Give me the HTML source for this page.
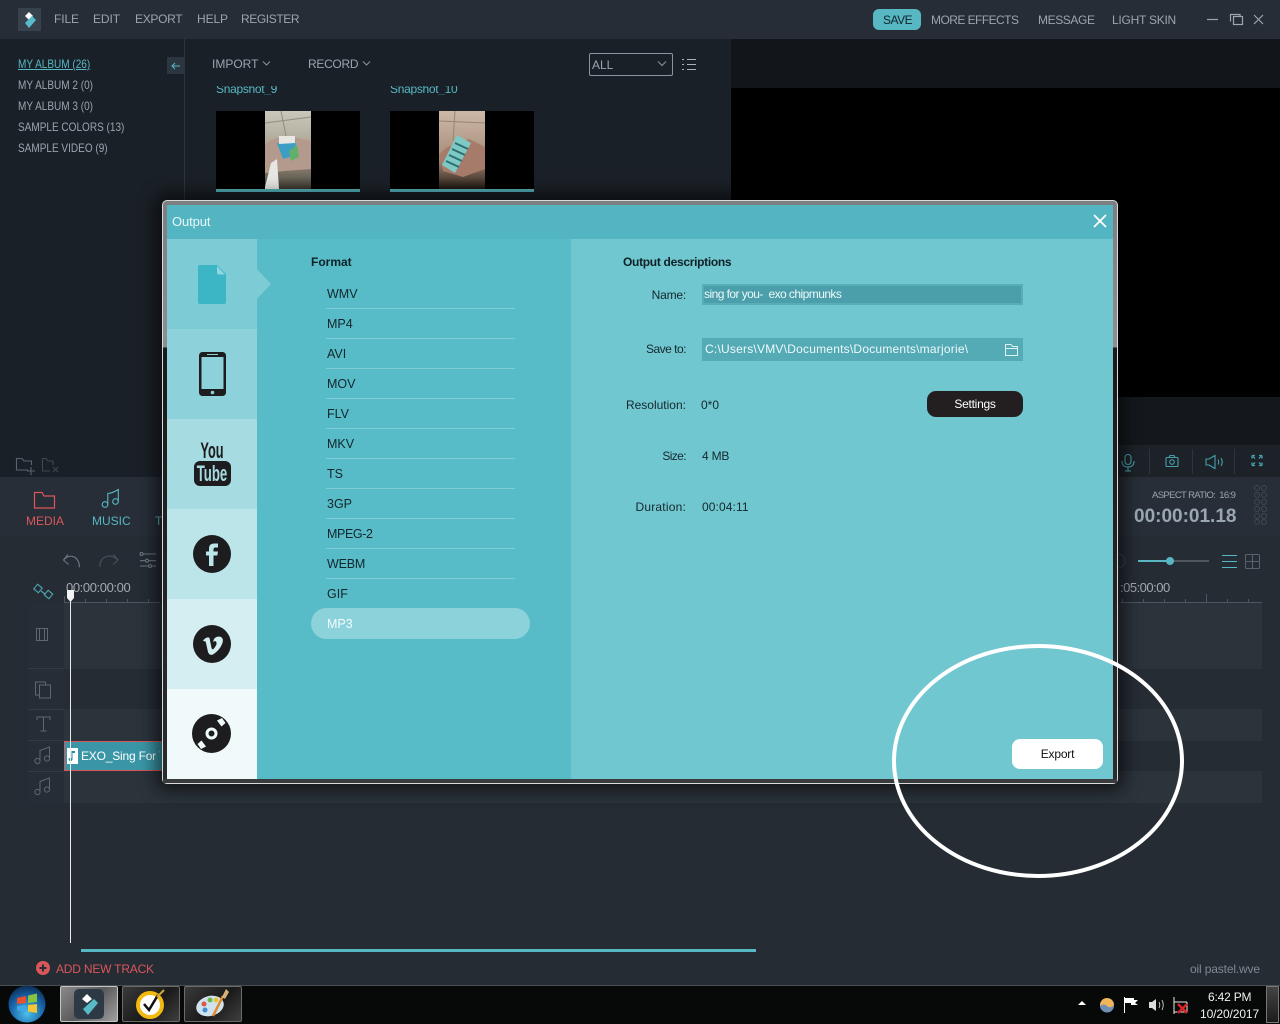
<!DOCTYPE html>
<html><head><meta charset="utf-8"><style>
html,body{margin:0;padding:0;width:1280px;height:1024px;overflow:hidden;background:#252c34}
body{position:relative;font-family:"Liberation Sans",sans-serif;font-size:12px}
.a,.t{position:absolute}
.t{white-space:nowrap;line-height:16px;height:16px}
svg{position:absolute;overflow:visible}
.g{color:#9ba5ad}
.s{transform:scaleX(.835);transform-origin:0 50%}
.f{color:#12262c;font-size:12.500px;left:327px}
.ln{position:absolute;left:326px;width:189px;height:1px;background:#7fccd5}
.lb{color:#15282d;font-size:12px;text-align:right;width:100px;left:586px}
.ic{fill:none;stroke:#5d6770;stroke-width:1}
</style></head><body>

<!-- top bar -->
<div class="a" style="left:0;top:0;width:1280px;height:39px;background:#262d36"></div>
<div class="a" style="left:18px;top:8px;width:23px;height:23px;background:#37424c"></div>
<svg style="left:0;top:0" width="60" height="40"><polygon points="29,12 33,16 29,20 25,16" fill="#fff"/><polygon points="25,23 32,16 36,20 29,28" fill="#57bcc8"/></svg>
<div class="t g" style="left:54px;top:11px;letter-spacing:-.1px">FILE</div>
<div class="t g" style="left:93px;top:11px;letter-spacing:-.1px">EDIT</div>
<div class="t g" style="left:135px;top:11px;letter-spacing:-.3px">EXPORT</div>
<div class="t g" style="left:197px;top:11px;letter-spacing:-.1px">HELP</div>
<div class="t g" style="left:241px;top:11px;letter-spacing:-.4px">REGISTER</div>
<div class="a" style="left:873px;top:9px;width:48px;height:21px;background:#57b7c3;border-radius:6px"></div>
<div class="t" style="left:883px;top:12px;color:#10252b;letter-spacing:-.5px">SAVE</div>
<div class="t g" style="left:931px;top:12px;letter-spacing:-.55px">MORE EFFECTS</div>
<div class="t g" style="left:1038px;top:12px;letter-spacing:-.4px">MESSAGE</div>
<div class="t g" style="left:1112px;top:12px;letter-spacing:-.25px">LIGHT SKIN</div>
<svg style="left:1200px;top:10px" width="70" height="20" fill="none" stroke="#9ba5ad" stroke-width="1.2"><path d="M7 9.500H18"/><rect x="33.500" y="6.500" width="9" height="8"/><path d="M30.500 11.500V4.500H40V6.500"/><path d="M54 5l9 9M63 5l-9 9"/></svg>

<!-- left media -->
<div class="a" style="left:0;top:39px;width:731px;height:438px;background:#1a2027"></div>
<div class="a" style="left:184px;top:39px;width:1px;height:161px;background:#2d353c"></div>
<div class="a" style="left:731px;top:39px;width:549px;height:49px;background:#12161a"></div>
<div class="a" style="left:731px;top:88px;width:549px;height:309px;background:#000"></div>
<div class="a" style="left:731px;top:397px;width:549px;height:48px;background:#14181c"></div>
<div class="a" style="left:731px;top:445px;width:549px;height:32px;background:#1c2228"></div>
<div class="t s" style="left:18px;top:56px;color:#57b7c3;text-decoration:underline">MY ALBUM (26)</div>
<div class="t g s" style="left:18px;top:77px">MY ALBUM 2 (0)</div>
<div class="t g s" style="left:18px;top:98px">MY ALBUM 3 (0)</div>
<div class="t g s" style="left:18px;top:119px">SAMPLE COLORS (13)</div>
<div class="t g s" style="left:18px;top:140px">SAMPLE VIDEO (9)</div>
<div class="a" style="left:167px;top:57px;width:17px;height:17px;background:#2b3640"></div>
<svg style="left:167px;top:57px" width="17" height="17" fill="none" stroke="#57b7c3"><path d="M13 9H5M8 6L5 9l3 3"/></svg>
<div class="t g" style="left:212px;top:56px">IMPORT</div>
<svg style="left:262px;top:60px" width="10" height="8" fill="none" stroke="#8b959d"><path d="M1 1.500l3.500 3.500 3.500-3.500"/></svg>
<div class="t g" style="left:308px;top:56px;letter-spacing:-.3px">RECORD</div>
<svg style="left:362px;top:60px" width="10" height="8" fill="none" stroke="#8b959d"><path d="M1 1.500l3.500 3.500 3.500-3.500"/></svg>
<div class="a" style="left:589px;top:53px;width:82px;height:21px;border:1px solid #8b959d;border-radius:2px"></div>
<div class="t g" style="left:592px;top:57px">ALL</div>
<svg style="left:656px;top:60px" width="12" height="8" fill="none" stroke="#8b959d"><path d="M2 1.500l4 4 4-4"/></svg>
<svg style="left:680px;top:57px" width="18" height="16" stroke="#a8b1b8"><path d="M7 2.500H16M7 7.500H16M7 12.500H16M2 2.500H4M2 7.500H4M2 12.500H4"/></svg>

<!-- thumbs -->
<div class="a" style="left:216px;top:86px;width:300px;height:9px;overflow:hidden">
 <div class="t" style="left:0;top:-5px;color:#57b7c3;letter-spacing:-.3px">Snapshot_9</div>
 <div class="t" style="left:174px;top:-5px;color:#57b7c3;letter-spacing:-.3px">Snapshot_10</div>
</div>
<div class="a" style="left:216px;top:111px;width:144px;height:78px;background:#000"></div>
<div class="a" style="left:216px;top:189px;width:144px;height:3px;background:#57b4be"></div>
<svg style="left:265px;top:111px" width="46" height="78"><defs><linearGradient id="fa" x1="0" y1="0" x2="0" y2="1"><stop offset="0" stop-color="#c9c8bc"/><stop offset=".55" stop-color="#a89e8e"/><stop offset=".85" stop-color="#6b6458"/><stop offset="1" stop-color="#3a362e"/></linearGradient></defs><rect width="46" height="78" fill="url(#fa)"/><path d="M0 12L46 6M16 0L22 30" stroke="#8f8d80"/><path d="M0 34Q10 24 28 26L46 30V58L20 60L0 62Z" fill="#b39a8c"/><polygon points="12,32 30,28 32,44 18,48" fill="#3d9ec4"/><polygon points="24,40 32,34 34,46 26,50" fill="#5fb06a"/><polygon points="14,25 30,25 30,32 14,33" fill="#e8e6e2"/><polygon points="0,76 6,52 12,48 14,78 0,78" fill="#e6e6e2"/></svg>
<div class="a" style="left:390px;top:111px;width:144px;height:78px;background:#000"></div>
<div class="a" style="left:390px;top:189px;width:144px;height:3px;background:#57b4be"></div>
<svg style="left:439px;top:111px" width="46" height="78"><defs><linearGradient id="fb" x1="0" y1="0" x2="0" y2="1"><stop offset="0" stop-color="#cdb9a8"/><stop offset=".6" stop-color="#a88d7a"/><stop offset=".85" stop-color="#5c4a3e"/><stop offset="1" stop-color="#1e1813"/></linearGradient></defs><rect width="46" height="78" fill="url(#fb)"/><path d="M0 10L46 12M16 0L14 30" stroke="#988474"/><path d="M0 44Q6 36 14 34L30 28L46 36V58L24 66L4 60Z" fill="#a77b6a"/><polygon points="18,24 32,32 16,62 3,54" fill="#7fc9c4"/><path d="M16 32L29 38M13 38L26 44M10 44L23 50M7 50L20 56" stroke="#2d6e72" stroke-width="2"/></svg>

<!-- mid strip -->
<svg style="left:14px;top:456px" width="60" height="20" fill="none" stroke="#59636b" stroke-width="1.1"><path d="M14 14H2.500V2.500H8L10 5H17.500V9M13 15H21M17 11V19"/><path d="M36 15H28.500V2.500H32L34 5H39V9" stroke="#3e474e"/><path d="M39 11l5 5M44 11l-5 5" stroke="#3e474e"/></svg>
<div class="a" style="left:0;top:477px;width:1280px;height:59px;background:#272e37"></div>
<svg style="left:33px;top:490px" width="24" height="20" fill="none" stroke="#d9575b" stroke-width="1.2"><path d="M1.500 18V2.500H9L11 6H21.500V18Z"/></svg>
<div class="t" style="left:26px;top:513px;color:#d9575b;font-size:12px">MEDIA</div>
<svg style="left:101px;top:488px" width="22" height="22" fill="none" stroke="#57b7c3" stroke-width="1.1"><circle cx="4" cy="16.500" r="2.800"/><circle cx="14.500" cy="13.500" r="2.800"/><path d="M6.800 16.500V5.500Q12 5 17.300 1.500V13.500"/></svg>
<div class="t" style="left:92px;top:513px;color:#57b7c3;font-size:12px">MUSIC</div>
<div class="t" style="left:155px;top:513px;color:#57b7c3;font-size:12px">T</div>

<!-- preview controls -->
<svg style="left:1118px;top:450px" width="150" height="26" fill="none" stroke="#45a0ac" stroke-width="1.100"><rect x="7" y="4.500" width="6" height="10" rx="3"/><path d="M4 11q0 6 6 6t6-6M10 17v4M7 21h6"/><rect x="48" y="7.500" width="12" height="9" rx="1"/><path d="M51 7.500l1-2h4l1 2"/><circle cx="54" cy="12" r="2.300"/><path d="M88 9v6h3l6 3.500V5.500l-6 3.500zM100 9.500q1.500 2.500 0 5M103 8q2.500 4 0 8"/><path d="M134 5.500h3M134 5.500v3M144 5.500h-3M144 5.500v3M134 15.500h3M134 15.500v-3M144 15.500h-3M144 15.500v-3M135 6.500l2 2M143 6.500l-2 2M135 14.500l2-2M143 14.500l-2-2" stroke-width="1.300"/></svg>
<div class="a" style="left:1149px;top:449px;width:1px;height:25px;background:#2e363d"></div>
<div class="a" style="left:1192px;top:449px;width:1px;height:25px;background:#2e363d"></div>
<div class="a" style="left:1234px;top:449px;width:1px;height:25px;background:#2e363d"></div>
<div class="t" style="left:1152px;top:488px;color:#9ba5ad;font-size:9.500px;letter-spacing:-.63px">ASPECT RATIO:&nbsp; 16:9</div>
<div class="t" style="left:1134px;top:505px;height:24px;line-height:24px;color:#9aa7b2;font-size:19px;font-weight:bold">00:00:01.18</div>
<svg style="left:1252px;top:484px" width="16" height="42" fill="none" stroke="#40484f"><circle cx="5" cy="4" r="2.500"/><circle cx="12" cy="4" r="2.500"/><circle cx="5" cy="11" r="2.500"/><circle cx="12" cy="11" r="2.500"/><circle cx="5" cy="18" r="2.500"/><circle cx="12" cy="18" r="2.500"/><circle cx="5" cy="25" r="2.500"/><circle cx="12" cy="25" r="2.500"/><circle cx="5" cy="32" r="2.500"/><circle cx="12" cy="32" r="2.500"/><circle cx="5" cy="38" r="2.500"/><circle cx="12" cy="38" r="2.500"/></svg>

<!-- timeline -->
<svg style="left:60px;top:550px" width="110" height="22" fill="none" stroke="#6d7780" stroke-width="1.100"><path d="M19.300 17.300C20 8 11 2 3.500 10M8 4.500L3.500 10 8.500 14.500"/><path d="M40 17C39 7 50 2 58 10M53.500 4.500L58 10 53 14.500" stroke="#48525a"/><path d="M80 4H96M80 10.700H96M80 16H96"/><circle cx="81.500" cy="4" r="1.500" fill="#252c34"/><circle cx="87" cy="10.700" r="1.500" fill="#252c34"/><circle cx="90" cy="16" r="1.500" fill="#252c34"/></svg>
<svg style="left:32px;top:582px" width="24" height="20" fill="none" stroke="#4fa7b3" stroke-width="1.100"><rect x="3" y="3.500" width="6" height="6" transform="rotate(40 6 6.500)"/><rect x="13.500" y="9.500" width="6" height="6" transform="rotate(40 16.500 12.500)"/><path d="M9 9l4 3"/></svg>
<div class="t" style="left:66px;top:580px;color:#a2aab1;font-size:13px;letter-spacing:-.4px">00:00:00:00</div>
<div class="a" style="left:64px;top:602px;width:96px;height:1px;background:#4d565e"></div>
<div class="a" style="left:1120px;top:602px;width:142px;height:1px;background:#4d565e"></div>
<svg style="left:64px;top:596px" width="100" height="7" stroke="#4d565e"><path d="M.5 0V6M21.500 3V6M42.500 3V6M63.500 3V6M84.500 3V6"/></svg>
<svg style="left:1120px;top:594px" width="142" height="9" stroke="#4d565e"><path d="M2.500 5V8M23.500 5V8M44.500 5V8M65.500 5V8M86.500 0V8M107.500 5V8M128.500 5V8"/></svg>
<div class="t" style="left:1120px;top:580px;color:#a2aab1;font-size:13px;letter-spacing:-.5px">:05:00:00</div>
<svg style="left:1110px;top:550px" width="160" height="22"><path d="M8 4a7 7 0 0 1 0 14" fill="none" stroke="#3a444c"/><rect x="28" y="10" width="71" height="2" fill="#4f585f"/><rect x="28" y="10" width="32" height="2" fill="#57b7c3"/><circle cx="60" cy="11" r="4" fill="#57b7c3"/><path d="M112 5.500H127M112 11.500H127M112 17.500H127" stroke="#57b7c3" stroke-width="1.100" fill="none"/><g fill="none" stroke="#59636b"><rect x="135.500" y="4.500" width="7" height="7" rx="1"/><rect x="142.500" y="4.500" width="7" height="7" rx="1"/><rect x="135.500" y="11.500" width="7" height="7" rx="1"/><rect x="142.500" y="11.500" width="7" height="7" rx="1"/></g></svg>

<div class="a" style="left:28px;top:603px;width:36px;height:200px;background:#262d36"></div>
<div class="a" style="left:64px;top:603px;width:1198px;height:66px;background:#2b333b"></div>
<div class="a" style="left:64px;top:709px;width:1198px;height:32px;background:#2b333b"></div>
<div class="a" style="left:64px;top:771px;width:1198px;height:32px;background:#2b333b"></div>
<div class="a" style="left:28px;top:668px;width:36px;height:1px;background:#323a42"></div>
<div class="a" style="left:28px;top:709px;width:36px;height:1px;background:#323a42"></div>
<div class="a" style="left:28px;top:740px;width:36px;height:1px;background:#323a42"></div>
<div class="a" style="left:28px;top:771px;width:36px;height:1px;background:#323a42"></div>
<svg class="ic" style="left:30px;top:625px" width="30" height="175"><rect x="6.500" y="3.500" width="11" height="12"/><path d="M9.500 3.500v12M14.500 3.500v12"/><rect x="5.500" y="57" width="10" height="13"/><rect x="9.500" y="60" width="11" height="13" fill="#262d36"/><path d="M7 95V92H20V95M13.500 92V106M10.500 106H16.500"/><circle cx="7.500" cy="136" r="2.600"/><circle cx="17" cy="133.500" r="2.600"/><path d="M10 136V125.500L19.500 122V133.500"/><circle cx="7.500" cy="167" r="2.600"/><circle cx="17" cy="164.500" r="2.600"/><path d="M10 167V156.500L19.500 153V164.500"/></svg>
<div class="a" style="left:64px;top:741px;width:100px;height:30px;background:#3a96a7;box-sizing:border-box;border:1px solid #d9575b"></div>
<div class="a" style="left:67px;top:748px;width:11px;height:16px;background:#fff"></div>
<svg style="left:67px;top:748px" width="11" height="16"><path d="M5.500 3V11.500a2 1.600 0 1 1-1-1.400V3H8V5H5.500Z" fill="#2a8b9d"/></svg>
<div class="t" style="left:81px;top:748px;width:79px;overflow:hidden;color:#fff;font-size:12px;letter-spacing:-.2px">EXO_Sing For You</div>
<div class="a" style="left:70px;top:600px;width:1px;height:343px;background:#e8eaec"></div>
<svg style="left:66px;top:589px" width="10" height="14"><path d="M1 1H8V9L4.500 13 1 9Z" fill="#f2f2f2"/></svg>
<div class="a" style="left:81px;top:949px;width:675px;height:3px;background:#57b7c3"></div>
<svg style="left:36px;top:961px" width="14" height="14"><circle cx="7" cy="7" r="7" fill="#d9575b"/><path d="M3.500 7H10.500M7 3.500V10.500" stroke="#262d36" stroke-width="2"/></svg>
<div class="t" style="left:56px;top:961px;color:#d9575b;letter-spacing:-.2px">ADD NEW TRACK</div>
<div class="t" style="left:1190px;top:961px;color:#7e8991;letter-spacing:-.15px">oil pastel.wve</div>

<!-- dialog -->
<div class="a" style="left:162px;top:200px;width:956px;height:584px;box-sizing:border-box;background:linear-gradient(180deg,#7c7e80 0,#8d8f91 146px,#1a1a1b 147px,#2b2c2e 100%);border-radius:5px;border:1px solid #d8dadb;box-shadow:0 0 16px 7px rgba(0,0,0,.55)"></div>
<div class="a" style="left:163px;top:779px;width:954px;height:4px;background:#3a3b3d"></div>
<div class="a" style="left:167px;top:205px;width:946px;height:574px;background:#70c7d0"></div>
<div class="a" style="left:167px;top:205px;width:946px;height:34px;background:#53b5c1"></div>
<div class="t" style="left:172px;top:214px;color:#e9f7f9;font-size:13px;letter-spacing:-.1px">Output</div>
<svg style="left:1092px;top:213px" width="16" height="16" stroke="#fff" stroke-width="1.800"><path d="M2 2L14 14M14 2L2 14"/></svg>
<div class="a" style="left:257px;top:239px;width:314px;height:540px;background:#57bcc8"></div>
<div class="a" style="left:167px;top:239px;width:90px;height:90px;background:#7dcbd4"></div>
<div class="a" style="left:167px;top:329px;width:90px;height:90px;background:#8dd1da"></div>
<div class="a" style="left:167px;top:419px;width:90px;height:90px;background:#a6dbe2"></div>
<div class="a" style="left:167px;top:509px;width:90px;height:90px;background:#bce5ea"></div>
<div class="a" style="left:167px;top:599px;width:90px;height:90px;background:#d5eef1"></div>
<div class="a" style="left:167px;top:689px;width:90px;height:90px;background:#f1fafb"></div>
<svg style="left:257px;top:269px" width="14" height="32"><polygon points="0,0 14,15 0,30" fill="#7dcbd4"/></svg>
<svg style="left:198px;top:265px" width="28" height="39"><path d="M2 0H19L28 9V37a2 2 0 0 1-2 2H2a2 2 0 0 1-2-2V2a2 2 0 0 1 2-2Z" fill="#3cb5c5"/><path d="M19 1L27 9.500H21a2 2 0 0 1-2-2Z" fill="#8fd6de"/></svg>
<svg style="left:199px;top:352px" width="27" height="44"><rect width="27" height="44" rx="3.500" fill="#1d1d1f"/><rect x="2.500" y="5" width="22" height="32" fill="#8dd1da"/><rect x="8" y="2" width="11" height="1" fill="#8dd1da"/><circle cx="13.500" cy="40.500" r="1.800" fill="#8dd1da"/></svg>
<div class="t" style="left:172px;top:440px;width:80px;height:22px;line-height:22px;text-align:center;color:#1d1d1f;font-size:22px;font-weight:bold;transform:scaleX(.58)">You</div>
<div class="a" style="left:194px;top:461px;width:37px;height:25px;background:#1d1d1f;border-radius:6px"></div>
<div class="t" style="left:172px;top:462px;width:80px;height:23px;line-height:23px;text-align:center;color:#a6dbe2;font-size:22px;font-weight:bold;transform:scaleX(.6)">Tube</div>
<svg style="left:193px;top:535px" width="38" height="38"><circle cx="19" cy="19" r="19" fill="#1d1d1f"/><path d="M16 31V20.500H13V16.500H16V13.500Q16 8.500 21 8.500H25V12.500H22.500Q20.500 12.500 20.500 14.500V16.500H25L24.300 20.500H20.500V31Z" fill="#bce5ea"/></svg>
<svg style="left:193px;top:625px" width="38" height="38"><circle cx="19" cy="19" r="19" fill="#1d1d1f"/><path d="M10 15.500L12 13.500Q15 11.500 16.500 13L18.500 23Q19.500 25.500 21 23.500Q25 18.500 23 16.500Q22 15.500 20 17Q21 11.500 26 11.500Q31 12 29.500 18Q27 25 20 29.500Q16.500 31 15 27L13 18Q12.500 15.500 11.500 16.500Z" fill="#d5eef1"/></svg>
<svg style="left:192px;top:714px" width="39" height="39"><circle cx="19.500" cy="19.500" r="19.500" fill="#1d1d1f"/><circle cx="19.500" cy="19.500" r="4.500" fill="none" stroke="#f1fafb" stroke-width="3"/><path d="M25 6.500L30 4l3.500 5-4 3.500ZM14 32.500L9 35l-3.500-5 4-3.500Z" fill="#f1fafb"/></svg>

<div class="t" style="left:311px;top:254px;color:#0e2126;font-weight:bold;font-size:12px">Format</div>
<div class="t f" style="top:286px">WMV</div><div class="ln" style="top:308px"></div>
<div class="t f" style="top:316px">MP4</div><div class="ln" style="top:338px"></div>
<div class="t f" style="top:346px">AVI</div><div class="ln" style="top:368px"></div>
<div class="t f" style="top:376px">MOV</div><div class="ln" style="top:398px"></div>
<div class="t f" style="top:406px">FLV</div><div class="ln" style="top:428px"></div>
<div class="t f" style="top:436px">MKV</div><div class="ln" style="top:458px"></div>
<div class="t f" style="top:466px">TS</div><div class="ln" style="top:488px"></div>
<div class="t f" style="top:496px">3GP</div><div class="ln" style="top:518px"></div>
<div class="t f" style="top:526px;letter-spacing:-.4px">MPEG-2</div><div class="ln" style="top:548px"></div>
<div class="t f" style="top:556px;letter-spacing:-.2px">WEBM</div><div class="ln" style="top:578px"></div>
<div class="t f" style="top:586px">GIF</div>
<div class="a" style="left:311px;top:608px;width:219px;height:31px;background:#8bd2db;border-radius:16px"></div>
<div class="t f" style="top:616px;color:#f2fbfc">MP3</div>

<div class="t" style="left:623px;top:254px;color:#0e2126;font-weight:bold;font-size:12px;letter-spacing:-.3px">Output descriptions</div>
<div class="t lb" style="top:287px;letter-spacing:-.2px">Name:</div>
<div class="a" style="left:702px;top:284px;width:321px;height:21px;box-sizing:border-box;background:#4a9faa;border:2px solid #58adb8"></div>
<div class="t" style="left:704px;top:286px;color:#eef9fa;font-size:12px;letter-spacing:-.55px">sing for you-&nbsp; exo chipmunks</div>
<div class="t lb" style="top:341px;letter-spacing:-.5px">Save to:</div>
<div class="a" style="left:702px;top:338px;width:321px;height:23px;background:#54abb6"></div>
<div class="t" style="left:705px;top:341px;color:#eef9fa;font-size:12px;letter-spacing:.22px">C:\Users\VMV\Documents\Documents\marjorie\</div>
<svg style="left:1004px;top:342px" width="16" height="15" fill="none" stroke="#dff3f5"><path d="M1.500 13.500V2.500H7L8.500 4.500H13.500V13.500ZM1.500 6.500H13.500"/></svg>
<div class="t lb" style="top:397px">Resolution:</div>
<div class="t" style="left:701px;top:397px;color:#15282d;font-size:12px">0*0</div>
<div class="a" style="left:927px;top:391px;width:96px;height:26px;background:#231f20;border-radius:9px"></div>
<div class="t" style="left:927px;top:396px;width:96px;text-align:center;color:#fff;font-size:12px;letter-spacing:-.25px">Settings</div>
<div class="t lb" style="top:448px;letter-spacing:-.6px">Size:</div>
<div class="t" style="left:702px;top:448px;color:#15282d;font-size:12px;letter-spacing:-.2px">4 MB</div>
<div class="t lb" style="top:499px;letter-spacing:.2px">Duration:</div>
<div class="t" style="left:702px;top:499px;color:#15282d;font-size:12px;letter-spacing:.1px">00:04:11</div>
<div class="a" style="left:1012px;top:739px;width:91px;height:30px;background:#fff;border-radius:8px"></div>
<div class="t" style="left:1012px;top:746px;width:91px;text-align:center;color:#111;font-size:12px;letter-spacing:-.2px">Export</div>

<!-- taskbar -->
<div class="a" style="left:0;top:985px;width:1280px;height:1px;background:#4a4f53"></div>
<div class="a" style="left:0;top:986px;width:1280px;height:38px;background:#070808"></div>
<svg style="left:8px;top:985px" width="38" height="38"><defs><radialGradient id="o" cx=".5" cy=".75" r=".75"><stop offset="0" stop-color="#4fc0ea"/><stop offset=".6" stop-color="#1763a8"/><stop offset="1" stop-color="#0b2c52"/></radialGradient></defs><circle cx="19" cy="19" r="18.500" fill="url(#o)"/><path d="M9 13l9-2v7l-9 1Z" fill="#e8502f"/><path d="M20 10.500l9-2v8.500l-9 1Z" fill="#86c440"/><path d="M9 21l9-1v7l-9-1.500Z" fill="#3fa6e6"/><path d="M20 20l9-1v9l-9-1.500Z" fill="#f3c530"/></svg>
<div class="a" style="left:60px;top:986px;width:58px;height:36px;box-sizing:border-box;background:linear-gradient(135deg,#8a8a8a,#5a5a5a 50%,#a0a0a0);border:1px solid #c5c5c5;border-radius:2px"></div>
<div class="a" style="left:74px;top:989px;width:30px;height:30px;background:#2d3a46;border-radius:5px"></div>
<svg style="left:74px;top:989px" width="30" height="30"><polygon points="13,5 18,10 13,14 8,10" fill="#fff"/><polygon points="9,20 20,10 24,14 14,26" fill="#57bcc8"/></svg>
<div class="a" style="left:122px;top:986px;width:58px;height:36px;box-sizing:border-box;background:linear-gradient(135deg,#3a3a3a,#1a1a1a 55%,#3e3e3e);border:1px solid #6b6b6b;border-radius:2px"></div>
<svg style="left:136px;top:988px" width="32" height="32"><circle cx="14" cy="17" r="12" fill="#fff" stroke="#f2b90f" stroke-width="4"/><path d="M8 16l5 6 9-15" fill="none" stroke="#111" stroke-width="2.500"/><path d="M21 9l7-7" stroke="#c9a63c" stroke-width="2"/></svg>
<div class="a" style="left:184px;top:986px;width:58px;height:36px;box-sizing:border-box;background:linear-gradient(135deg,#3a3a3a,#1a1a1a 55%,#3e3e3e);border:1px solid #6b6b6b;border-radius:2px"></div>
<svg style="left:195px;top:988px" width="36" height="32"><ellipse cx="15" cy="18" rx="14" ry="10" fill="#cfe2ee" transform="rotate(-15 15 18)"/><circle cx="9" cy="16" r="2.500" fill="#d9574a"/><circle cx="15" cy="12" r="2.500" fill="#6bb54a"/><circle cx="21" cy="12" r="2.500" fill="#e8c43a"/><circle cx="10" cy="22" r="2.500" fill="#3f8fd6"/><path d="M18 28L28 8" stroke="#e08a2a" stroke-width="2.500"/><path d="M27 9L31 1l3 3-4 7Z" fill="#d8b17a"/></svg>

<svg style="left:1075px;top:990px" width="120" height="32"><polygon points="3,15 7,11 11,15" fill="#fff"/><circle cx="32" cy="15" r="7" fill="#efb45c"/><path d="M25 16q4-3 7 0t7-1a7 7 0 0 1-14 1Z" fill="#6f8fb5"/><path d="M49.500 7V23" stroke="#fff"/><path d="M50 8H59V10H63L60 13 63 15H56V13H50Z" fill="#fff"/><path d="M74 12H77L81 9V21L77 18H74Z" fill="#ddd"/><path d="M84 12q1.500 3 0 6M87 10q2.500 5 0 10" fill="none" stroke="#bbb"/><path d="M99 7V24M99 12H112M99 22H112M112 12V22" stroke="#e8e8e8" fill="none"/><path d="M103 14L112 23M112 14L103 23" stroke="#d8242a" stroke-width="2.500"/></svg>
<div class="t" style="left:1208px;top:989px;color:#f0f0f0;font-size:12px;letter-spacing:-.2px">6:42 PM</div>
<div class="t" style="left:1200px;top:1006px;color:#f0f0f0;font-size:12px;letter-spacing:-.1px">10/20/2017</div>
<div class="a" style="left:1266px;top:986px;width:13px;height:37px;box-sizing:border-box;background:linear-gradient(#444,#1c1c1c);border:1px solid #777"></div>

<!-- circle annotation -->
<svg style="left:0;top:0;pointer-events:none" width="1280" height="1024"><ellipse cx="1038" cy="761" rx="144" ry="115" fill="none" stroke="#fff" stroke-width="4"/></svg>
</body></html>
